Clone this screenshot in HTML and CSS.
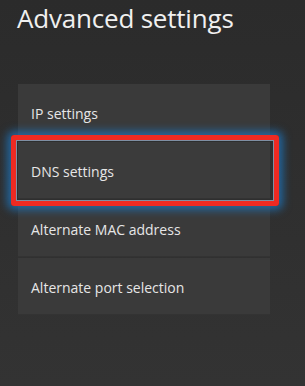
FILE: index.html
```html
<!DOCTYPE html>
<html>
<head>
<meta charset="utf-8">
<link rel="stylesheet" href="styles.css">
</head>
<body>
<div class="screen">
  <h1 class="title">Advanced settings</h1>
  <ul class="menu">
    <li class="item">IP settings</li>
    <li class="item focused">DNS settings</li>
    <li class="item">Alternate MAC address</li>
    <li class="item">Alternate port selection</li>
  </ul>
</div>
</body>
</html>
```
FILE: styles.css
```css
html, body {
  margin: 0;
  padding: 0;
  background: #2e2e2e;
}
.screen {
  width: 305px;
  height: 386px;
  overflow: hidden;
  background: linear-gradient(to bottom, #2b2b2b 0%, #2f2f2f 50%, #333333 100%);
  font-family: "Open Sans", "Noto Sans", sans-serif;
  color: #ececec;
}
.title {
  margin: 0;
  padding: 3px 0 0 17px;
  font-weight: 400;
  font-size: 26px;
  line-height: 30px;
  letter-spacing: -0.2px;
  color: #f0f0f0;
}
.menu {
  list-style: none;
  margin: 51px 0 0 18px;
  padding: 0;
  width: 252px;
  display: flex;
  flex-direction: column;
  gap: 1px;
}
.item {
  height: 57px;
  box-sizing: border-box;
  padding: 3px 0 0 13px;
  display: flex;
  align-items: center;
  font-size: 14px;
  background: #3a3a3a;
  border-bottom: 1px solid #333;
  color: #e6e6e6;
}
.focused {
  position: relative;
  background: #3b3b3b;
}
.focused::after {
  content: "";
  position: absolute;
  top: -7px;
  left: -7px;
  right: -9px;
  bottom: -8px;
  border: 5px solid #ee2a22;
  border-radius: 3px;
  box-shadow: inset 0 0 0 1px #7f8fa3, 0 0 9px 4px rgba(30, 115, 185, 0.8);
}
```
